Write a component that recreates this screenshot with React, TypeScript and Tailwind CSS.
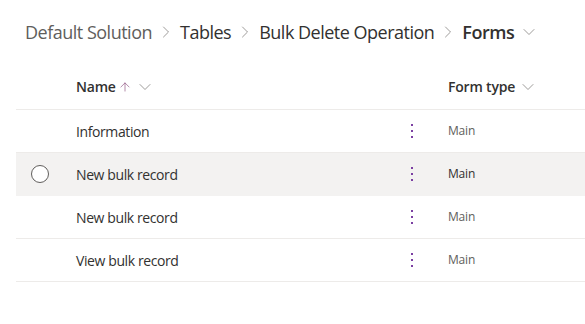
import { ChevronDown, ChevronRight, ArrowUp } from "lucide-react";

const rows = [
  { name: "Information", type: "Main", hover: false },
  { name: "New bulk record", type: "Main", hover: true },
  { name: "New bulk record", type: "Main", hover: false },
  { name: "View bulk record", type: "Main", hover: false },
];

function Kebab() {
  return (
    <div className="flex flex-col items-center gap-[4px]">
      <span className="block h-[2px] w-[2px] bg-[#7b3fa2]" />
      <span className="block h-[2px] w-[2px] bg-[#7b3fa2]" />
      <span className="block h-[2px] w-[2px] bg-[#7b3fa2]" />
    </div>
  );
}

export default function App() {
  return (
    <div className="h-[324px] w-[585px] overflow-hidden bg-white font-['Segoe_UI','Open_Sans',sans-serif]">
      <div className="flex h-[64px] items-center pl-[25px] text-[18px] tracking-[-0.5px] text-[#323130]">
        <span className="text-[#605e5c]">Default Solution</span>
        <ChevronRight className="mx-[4px] h-[20px] w-[20px] text-[#8a8886]" strokeWidth={1} />
        <span>Tables</span>
        <ChevronRight className="mx-[4px] h-[20px] w-[20px] text-[#8a8886]" strokeWidth={1} />
        <span>Bulk Delete Operation</span>
        <ChevronRight className="mx-[4px] h-[20px] w-[20px] text-[#8a8886]" strokeWidth={1} />
        <span className="font-semibold">Forms</span>
        <ChevronDown className="ml-[5px] h-[20px] w-[20px] text-[#8a8886]" strokeWidth={1} />
      </div>

      <div className="ml-[16px]">
        <div className="flex h-[46px] items-center border-b border-[#edebe9] text-[14px] font-semibold tracking-[-0.2px] text-[#323130]">
          <div className="w-[60px]" />
          <div className="flex w-[312px] items-center">
            <span>Name</span>
            <ArrowUp className="ml-[2px] h-[14px] w-[14px] text-[#8a4b7c]" strokeWidth={1.1} />
            <ChevronDown className="ml-[3px] h-[20px] w-[20px] text-[#8a8886]" strokeWidth={1} />
          </div>
          <div className="w-[60px]" />
          <div className="flex items-center">
            <span>Form type</span>
            <ChevronDown className="ml-[3px] h-[20px] w-[20px] text-[#8a8886]" strokeWidth={1} />
          </div>
        </div>

        {rows.map((row, i) => (
          <div
            key={i}
            className={`flex h-[43px] items-center border-b ${
              row.hover ? "border-[#f3f2f1] bg-[#f3f2f1]" : "border-[#edebe9]"
            }`}
          >
            <div className="flex w-[60px] items-center justify-center">
              {row.hover && (
                <span className="ml-[-12px] block h-[18px] w-[18px] rounded-full border border-[#605e5c] bg-white" />
              )}
            </div>
            <div className="w-[312px] text-[14px] tracking-[-0.4px] text-[#323130]">{row.name}</div>
            <div className="flex w-[60px] justify-center pr-[13px]">
              <Kebab />
            </div>
            <div className={`text-[12px] tracking-[-0.2px] ${row.hover ? "text-[#323130]" : "text-[#605e5c]"}`}>{row.type}</div>
          </div>
        ))}
      </div>
    </div>
  );
}
